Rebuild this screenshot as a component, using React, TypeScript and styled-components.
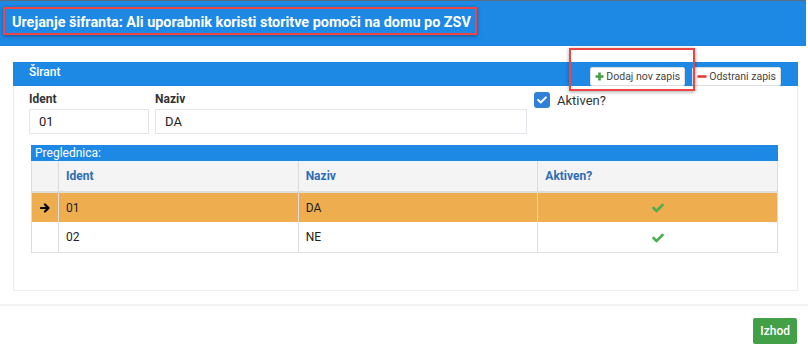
import styled, { createGlobalStyle } from 'styled-components';
import { FaCheck } from 'react-icons/fa';

const GlobalStyle = createGlobalStyle`
  body {
    margin: 0;
    background: #fff;
    font-family: Roboto, 'Liberation Sans', Arial, sans-serif;
    color: #333;
  }
  * {
    box-sizing: border-box;
  }
`;

const rows = [
  { ident: '01', naziv: 'DA', aktiven: true, selected: true },
  { ident: '02', naziv: 'NE', aktiven: true, selected: false },
];

// thick green tick used in the grid
function Tick() {
  return (
    <svg width="12" height="10" viewBox="0 0 12 10">
      <polyline
        points="1.5,5 4.5,8 10.5,2"
        fill="none"
        stroke="#4caf50"
        strokeWidth="2.6"
        strokeLinecap="round"
        strokeLinejoin="round"
      />
    </svg>
  );
}

function PlusIcon() {
  return (
    <svg width="9" height="9" viewBox="0 0 9 9">
      <path d="M4.5 0.5v8M0.5 4.5h8" stroke="#43a047" strokeWidth="2.6" />
    </svg>
  );
}

function MinusIcon() {
  return (
    <svg width="10" height="9" viewBox="0 0 10 9">
      <path d="M0.5 4.5h9" stroke="#e53935" strokeWidth="2.6" />
    </svg>
  );
}

function RowArrow() {
  return (
    <svg width="10" height="10" viewBox="0 0 10 10">
      <path
        d="M1 5h7M5 1.5L8.5 5 5 8.5"
        fill="none"
        stroke="#000"
        strokeWidth="2.2"
        strokeLinecap="round"
        strokeLinejoin="round"
      />
    </svg>
  );
}

export default function App() {
  return (
    <Page>
      <GlobalStyle />
      <TopBar>
        <Title>Urejanje šifranta: Ali uporabnik koristi storitve pomoči na domu po ZSV</Title>
      </TopBar>

      <Content>
        <Panel>
          <PanelHeader>
            <PanelTitle>Širant</PanelTitle>
            <Actions>
              <ToolButton>
                <PlusIcon />
                Dodaj nov zapis
              </ToolButton>
              <ToolButton>
                <MinusIcon />
                Odstrani zapis
              </ToolButton>
            </Actions>
          </PanelHeader>

          <PanelBody>
            <FormRow>
              <Field $width={120}>
                <Label>Ident</Label>
                <Input>01</Input>
              </Field>
              <Field $width={372}>
                <Label>Naziv</Label>
                <Input>DA</Input>
              </Field>
              <CheckField>
                <CheckBox>
                  <FaCheck color="#fff" size={10} />
                </CheckBox>
                <span>Aktiven?</span>
              </CheckField>
            </FormRow>

            <Grid>
              <GridTitle>Preglednica:</GridTitle>
              <Table>
                <colgroup>
                  <col style={{ width: 27 }} />
                  <col />
                  <col />
                  <col />
                </colgroup>
                <thead>
                  <tr>
                    <Th />
                    <Th>Ident</Th>
                    <Th>Naziv</Th>
                    <Th>Aktiven?</Th>
                  </tr>
                </thead>
                <tbody>
                  {rows.map((r) => (
                    <Tr key={r.ident} $selected={r.selected}>
                      <Td $center>{r.selected && <RowArrow />}</Td>
                      <Td>{r.ident}</Td>
                      <Td>{r.naziv}</Td>
                      <Td $center>{r.aktiven && <Tick />}</Td>
                    </Tr>
                  ))}
                </tbody>
              </Table>
            </Grid>
          </PanelBody>
        </Panel>
      </Content>

      <Footer>
        <ExitButton>Izhod</ExitButton>
      </Footer>

      <Highlight style={{ left: 3, top: 7, width: 474, height: 28 }} />
      <Highlight style={{ left: 569, top: 48, width: 126, height: 43 }} />
    </Page>
  );
}

const Page = styled.div`
  position: relative;
  width: 808px;
  height: 352px;
  overflow: hidden;
`;

const TopBar = styled.header`
  display: flex;
  align-items: center;
  height: 46px;
  padding: 0 12px 2px;
  margin-right: 2px;
  background: #1e88e5;
  border-top: 1px solid #5d6b7a;
`;

const Title = styled.h1`
  margin: 0;
  font-size: 14.4px;
  font-weight: 700;
  color: #fff;
`;

const Content = styled.main`
  padding: 16px 10px 0 13px;
`;

const Panel = styled.section`
  border: 1px solid #ececec;
  border-top: none;
`;

const PanelHeader = styled.div`
  display: flex;
  align-items: center;
  justify-content: space-between;
  height: 24px;
  margin: 0 -1px;
  padding: 0 17px 0 16px;
  background: #1e88e5;
`;

const PanelTitle = styled.span`
  font-size: 12px;
  font-weight: 500;
  color: #fff;
  margin-top: -5px;
`;

const Actions = styled.div`
  display: flex;
  gap: 7px;
  margin-top: 5px;
`;

const ToolButton = styled.button`
  display: flex;
  align-items: center;
  gap: 2px;
  height: 19px;
  padding: 0 4px 0 4px;
  background: #fff;
  border: 1px solid #ddd;
  border-radius: 2px;
  font-family: inherit;
  font-size: 10.5px;
  color: #444;
`;

const PanelBody = styled.div`
  padding: 6px 19px 37px 15px;
`;

const FormRow = styled.div`
  display: flex;
  align-items: flex-start;
  gap: 6px;
`;

const Field = styled.div<{ $width: number }>`
  display: flex;
  flex-direction: column;
  width: ${({ $width }) => $width}px;
`;

const Label = styled.label`
  font-size: 12px;
  font-weight: 700;
  color: #333;
  height: 14px;
  line-height: 14px;
  margin-bottom: 3px;
`;

const Input = styled.div`
  height: 25px;
  padding: 0 9px;
  border: 1px solid #e2e5e9;
  font-size: 13px;
  line-height: 23px;
  color: #222;
`;

const CheckField = styled.div`
  display: flex;
  align-items: center;
  gap: 7px;
  margin-left: 1px;
  font-size: 13px;
  color: #333;
`;

const CheckBox = styled.span`
  display: flex;
  align-items: center;
  justify-content: center;
  width: 16px;
  height: 16px;
  border-radius: 3px;
  background: #2f80d8;
`;

const Grid = styled.div`
  margin: 11px 0 0 2px;
`;

const GridTitle = styled.div`
  height: 16px;
  padding-left: 4px;
  background: #1e88e5;
  color: #fff;
  font-size: 12px;
  line-height: 16px;
`;

const Table = styled.table`
  width: 100%;
  table-layout: fixed;
  border-collapse: collapse;
  font-size: 12px;
  border: 1px solid #ddd;
  border-top: none;
`;

const Th = styled.th`
  height: 31px;
  padding: 0 7px;
  background: #f4f4f4;
  border-left: 1px solid #ddd;
  border-bottom: 2px solid #ddd;
  text-align: left;
  font-weight: 700;
  color: #2d6db5;
  &:first-child {
    border-left: none;
  }
`;

const Tr = styled.tr<{ $selected?: boolean }>`
  background: ${({ $selected }) => ($selected ? '#eead4f' : '#fff')};
  & + & td {
    border-top: 1px solid #ddd;
  }
`;

const Td = styled.td<{ $center?: boolean }>`
  height: 30px;
  padding: 0 7px;
  border-left: 1px solid #ddd;
  text-align: ${({ $center }) => ($center ? 'center' : 'left')};
  color: #222;
  vertical-align: middle;
  &:first-child {
    border-left: none;
  }
  svg {
    vertical-align: middle;
  }
`;

const Footer = styled.footer`
  display: flex;
  justify-content: flex-end;
  margin-top: 13px;
  padding: 12px 11px 0;
  border-top: 2px solid #f2f2f2;
`;

const ExitButton = styled.button`
  height: 26px;
  padding: 0 7px;
  background: #43a047;
  border: none;
  border-radius: 2px;
  color: #fff;
  font-family: inherit;
  font-size: 12px;
  font-weight: 500;
`;

const Highlight = styled.div`
  position: absolute;
  border: 2px solid #ef4444;
  box-shadow: 0 1px 4px rgba(0, 0, 0, 0.35);
  pointer-events: none;
`;
